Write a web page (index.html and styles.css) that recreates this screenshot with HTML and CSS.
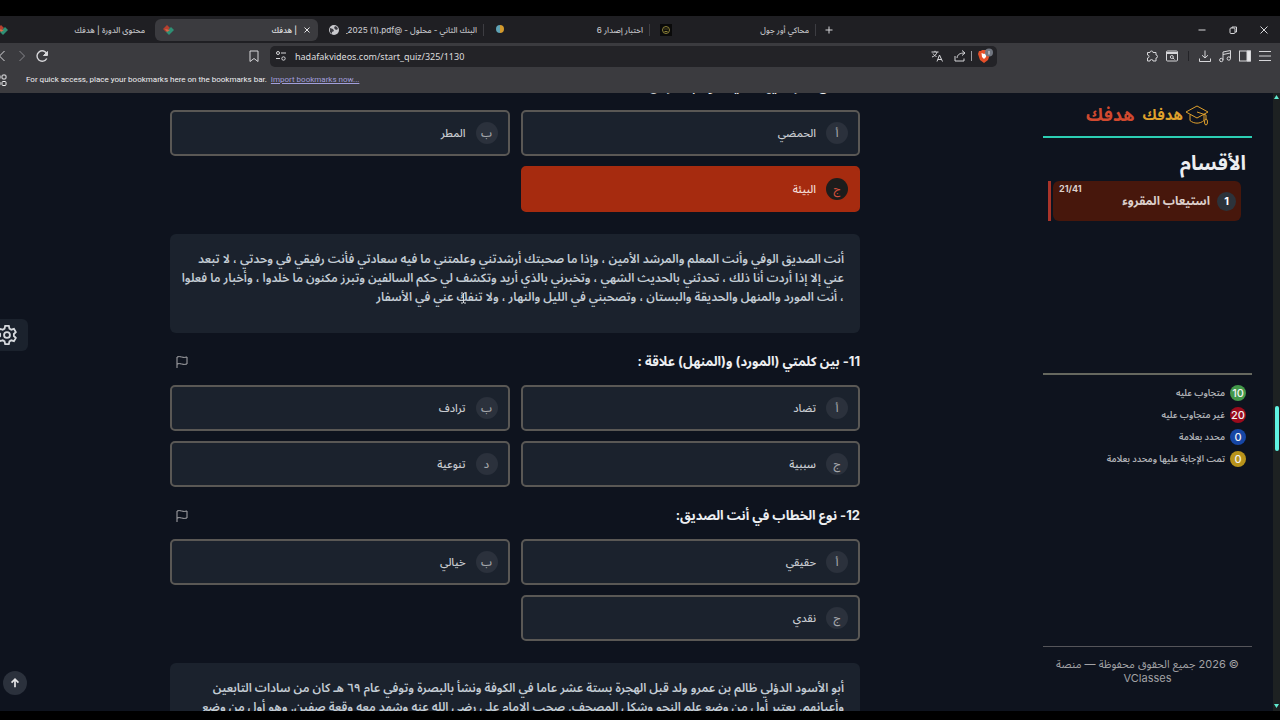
FILE: index.html
```html
<!DOCTYPE html>
<html lang="ar">
<head>
  <meta charset="UTF-8">
  <title>| هدفك</title>
  <link rel="stylesheet" href="styles.css">
</head>
<body>
  <div class="browser">
    <div class="tab-strip">
      <a class="tab" href="#">
        <svg class="favicon" viewBox="0 0 12 12"><path d="M1 5 5 1l3 3-4 4z" fill="#b5402f"/><path d="M4 8l5-5 3 3-5 5z" fill="#2f8f74"/><path d="M3 5l5 1-3 2z" fill="#d9694a"/></svg>
        <span class="tab-title" dir="rtl">محتوى الدورة | هدفك</span>
      </a>
      <div class="tab active">
        <svg class="favicon" viewBox="0 0 12 12"><path d="M1 5 5 1l3 3-4 4z" fill="#b5402f"/><path d="M4 8l5-5 3 3-5 5z" fill="#2f8f74"/><path d="M3 5l5 1-3 2z" fill="#d9694a"/></svg>
        <span class="tab-title" dir="rtl">| هدفك</span>
        <button class="tab-close" aria-label="Close tab"><svg viewBox="0 0 8 8"><path d="M1.500 1.500l5 5M6.500 1.500l-5 5"/></svg></button>
      </div>
      <a class="tab divided" href="#">
        <svg class="favicon" viewBox="0 0 12 12"><circle cx="6" cy="6" r="5" fill="#c8c8cc"/><path d="M2 4l3 1 1 2-2 1v2L2 8zM7 2l2 1 1 2-2 1-2-2z" fill="#3a3a40"/></svg>
        <span class="tab-title" dir="rtl">البنك الثاني - محلول - @<bdi dir="ltr">_2025 (1).pdf</bdi></span>
      </a>
      <a class="tab divided" href="#">
        <svg class="favicon" viewBox="0 0 12 12"><path d="M6 1a4 4 0 0 0 0 8z" fill="#5fa3b5"/><path d="M6 1a4 4 0 0 1 0 8z" fill="#d39a2d"/></svg>
        <span class="tab-title" dir="rtl">اختبار إصدار 6</span>
      </a>
      <a class="tab divided" href="#">
        <svg class="favicon" viewBox="0 0 12 12"><path d="M0 0h12v12H0z" fill="#0a0a0a"/><circle cx="6" cy="6" r="3.500" fill="none" stroke="#8d8238"/><path d="M4.500 5h1M6.500 5h1M4.500 7.500h3" stroke="#8d8238" fill="none"/></svg>
        <span class="tab-title" dir="rtl">محاكي أور جول</span>
      </a>
      <button class="icon-btn new-tab" aria-label="New tab"><svg viewBox="0 0 14 14"><path d="M7 3.500v7M3.500 7h7"/></svg></button>
      <div class="window-buttons">
        <button class="icon-btn" aria-label="Minimize"><svg viewBox="0 0 14 14"><path d="M3.500 7h7"/></svg></button>
        <button class="icon-btn" aria-label="Restore"><svg viewBox="0 0 14 14"><rect x="4" y="5" width="5" height="5.500" rx="1"/><path d="M6 5V4h4.500v5H9"/></svg></button>
        <button class="icon-btn" aria-label="Close"><svg viewBox="0 0 14 14"><path d="M3.500 3.500l7 7M10.500 3.500l-7 7"/></svg></button>
      </div>
    </div>

    <div class="toolbar">
      <div class="nav-buttons">
        <button class="icon-btn" aria-label="Back"><svg viewBox="0 0 14 14"><path d="M9.500 2 4.500 7l5 5"/></svg></button>
        <button class="icon-btn dim" aria-label="Forward"><svg viewBox="0 0 14 14"><path d="M4.500 2l5 5-5 5"/></svg></button>
        <button class="icon-btn" aria-label="Reload"><svg viewBox="0 0 14 14"><path d="M11.800 9.500a5.200 5.200 0 1 1 .2-4.500" stroke-width="1.400"/><path d="M12.500 2.500v4h-4z" fill="#d6d6d9"/></svg></button>
      </div>
      <button class="icon-btn" aria-label="Bookmark"><svg viewBox="0 0 14 14"><path d="M3 2h8v10.500L7 9.500l-4 3z"/></svg></button>
      <div class="address">
        <svg viewBox="0 0 14 14"><circle cx="4" cy="4" r="1.500"/><path d="M7 4h5M2 9.500h4"/><circle cx="9.500" cy="9.500" r="1.700"/></svg>
        <input class="url" type="text" dir="ltr" aria-label="Address" value="hadafakvideos.com/start_quiz/325/1130">
        <button class="icon-btn" aria-label="Translate"><svg viewBox="0 0 14 14"><path d="M1.500 3h7M5 1.800V3M7 3c-.5 2.500-2.500 4.200-5 5M3 4.500c.8 1.500 2 2.500 3.500 3M7 12.500l2.500-6.500 3 6.500M8 10.500h3.800"/></svg></button>
        <button class="icon-btn" aria-label="Share"><svg viewBox="0 0 14 14"><path d="M2 7v5h9V9.500M4 9c.3-3.500 3-5 7.500-5M9 1.500 12 4 9 6.500"/></svg></button>
        <span class="bar light"></span>
        <button class="icon-btn shield" aria-label="Shields"><svg viewBox="0 0 18 16"><path d="M3 3h2l1-1h4l1 1h2l1 3-2 6-4 3-4-3-2-6z" fill="#e5502a" stroke="none"/><path d="M5.500 5 8 6l2.500-1-.5 4-2 2-2-2z" fill="#fff" stroke="none"/><circle cx="13" cy="4.500" r="4" fill="#70757f" stroke="none"/><path d="M13 3v3.500" stroke="#dfe3ea"/></svg></button>
      </div>
      <div class="tool-buttons">
        <button class="icon-btn" aria-label="Extensions"><svg viewBox="0 0 14 14"><path d="M2.500 3.500H5a1.500 1.500 0 1 1 3 0h3V6a1.500 1.500 0 1 1 0 3v3H8a1.500 1.500 0 0 0-3 0H2.500V9a1.500 1.500 0 0 0 0-3z"/></svg></button>
        <button class="icon-btn" aria-label="Find in page"><svg viewBox="0 0 14 14"><rect x="1.500" y="2" width="11" height="10" rx="1"/><path d="M1.500 4h11" stroke-width="2"/><circle cx="6.800" cy="8" r="1.500"/><path d="M8 9l1.500 1.500"/></svg></button>
        <span class="bar"></span>
        <button class="icon-btn" aria-label="Downloads"><svg viewBox="0 0 14 14"><path d="M7 1.500v7.500M4 6.200 7 9l3-2.800M1.500 9.500v3h11v-3"/></svg></button>
        <button class="icon-btn" aria-label="Media"><svg viewBox="0 0 14 14"><path d="M5 11V3l7.500-1.500v8M5 5.500 12.500 4"/><circle cx="3.300" cy="11" r="1.700"/><circle cx="10.800" cy="9.500" r="1.700"/></svg></button>
        <button class="icon-btn" aria-label="Side panel"><svg viewBox="0 0 14 14"><rect x="1.500" y="2" width="11" height="10"/><path d="M9 2h3.500v10H9z" fill="#e8e8ea"/></svg></button>
        <button class="icon-btn" aria-label="Menu"><svg viewBox="0 0 14 14"><path d="M1 2.500h12M1 7h12M1 11.500h12"/></svg></button>
      </div>
    </div>

    <div class="bookmarks">
      <svg viewBox="0 0 14 14"><rect x="1" y="2" width="4" height="4" rx="1"/><rect x="7" y="2" width="4" height="4" rx="1"/><rect x="1" y="8.500" width="4" height="4" rx="1"/><rect x="7" y="8.500" width="4" height="4" rx="1"/></svg>
      <span>For quick access, place your bookmarks here on the bookmarks bar.</span>
      <a href="#">Import bookmarks now...</a>
    </div>

    <div class="page" dir="rtl">
      <div class="scrollbar">
        <svg viewBox="0 0 7 5"><path d="M3.500 0 6 4H1z"/></svg>
        <span class="thumb"></span>
        <svg viewBox="0 0 7 5"><path d="M1 0h5L3.500 4z"/></svg>
      </div>

      <aside class="sidebar">
        <div class="logo">
          <span class="logo-mark">
            <svg viewBox="0 0 24 22"><path d="M1 8 12 2l11 6-11 6zM5 10.500v6c4 3.500 10 3.500 14 0v-6M12 8l9 3v4"/><ellipse cx="21" cy="18" rx="1.500" ry="3"/></svg>
            هدفك
          </span>
          <span class="logo-text">هدفك</span>
        </div>
        <h2>الأقسام</h2>
        <a class="section" href="#">
          <span class="section-number">1</span>
          <span class="section-name">استيعاب المقروء</span>
          <span class="section-count">21/41</span>
        </a>
        <ul class="legend">
          <li><span class="dot green">10</span>متجاوب عليه</li>
          <li><span class="dot red">20</span>غير متجاوب عليه</li>
          <li><span class="dot blue">0</span>محدد بعلامة</li>
          <li><span class="dot gold">0</span>تمت الإجابة عليها ومحدد بعلامة</li>
        </ul>
        <footer>© 2026 جميع الحقوق محفوظة — منصة VClasses</footer>
      </aside>

      <main>
        <div class="quiz">
          <section class="question">
            <div class="question-head">
              <h3>10- من أكثر ما يهدد حياة كوكب الأرض :</h3>
            </div>
            <div class="options">
              <label class="option"><input type="radio" name="q10"><span class="letter">أ</span>الحمضي</label>
              <label class="option"><input type="radio" name="q10"><span class="letter">ب</span>المطر</label>
              <label class="option"><input type="radio" name="q10" checked><span class="letter">ج</span>البيئة</label>
            </div>
          </section>

          <p class="passage">أنت الصديق الوفي وأنت المعلم والمرشد الأمين ، وإذا ما صحبتك أرشدتني وعلمتني ما فيه سعادتي فأنت رفيقي في وحدتي ، لا تبعد<br>عني إلا إذا أردت أنا ذلك ، تحدثني بالحديث الشهي ، وتخبرني بالذي أريد وتكشف لي حكم السالفين وتبرز مكنون ما خلدوا ، وأخبار ما فعلوا<br>، أنت المورد والمنهل والحديقة والبستان ، وتصحبني في الليل والنهار ، ولا تنفك عني في الأسفار</p>

          <section class="question">
            <div class="question-head">
              <h3>11- بين كلمتي (المورد) و(المنهل) علاقة :</h3>
              <button class="flag" aria-label="علامة"><svg viewBox="0 0 14 14"><path d="M2 13V2c3-1.500 6 1.500 10 0v7c-4 1.500-7-1.500-10 0"/></svg></button>
            </div>
            <div class="options">
              <label class="option"><input type="radio" name="q11"><span class="letter">أ</span>تضاد</label>
              <label class="option"><input type="radio" name="q11"><span class="letter">ب</span>ترادف</label>
              <label class="option"><input type="radio" name="q11"><span class="letter">ج</span>سببية</label>
              <label class="option"><input type="radio" name="q11"><span class="letter">د</span>تنوعية</label>
            </div>
          </section>

          <section class="question">
            <div class="question-head">
              <h3>12- نوع الخطاب في أنت الصديق:</h3>
              <button class="flag" aria-label="علامة"><svg viewBox="0 0 14 14"><path d="M2 13V2c3-1.500 6 1.500 10 0v7c-4 1.500-7-1.500-10 0"/></svg></button>
            </div>
            <div class="options">
              <label class="option"><input type="radio" name="q12"><span class="letter">أ</span>حقيقي</label>
              <label class="option"><input type="radio" name="q12"><span class="letter">ب</span>خيالي</label>
              <label class="option"><input type="radio" name="q12"><span class="letter">ج</span>نقدي</label>
            </div>
          </section>

          <p class="passage">أبو الأسود الدؤلي ظالم بن عمرو ولد قبل الهجرة بستة عشر عاما في الكوفة ونشأ بالبصرة وتوفي عام ٦٩ هـ كان من سادات التابعين<br>وأعيانهم. يعتبر أول من وضع علم النحو وشكل المصحف. صحب الامام علي رضي الله عنه وشهد معه وقعة صفين. وهو أول من وضع</p>
        </div>
      </main>

      <button class="settings" aria-label="الإعدادات"><svg viewBox="0 0 24 24"><path d="M10 2h4l.7 3 2 1.200L19.600 5.300l2 3.500-2.100 2.100v2.200l2.100 2.100-2 3.500-2.900-.9-2 1.200-.7 3h-4l-.7-3-2-1.200-2.900.9-2-3.500 2.100-2.100v-2.200L2.400 8.800l2-3.500 2.900.9 2-1.200z"/><circle cx="12" cy="12" r="3.200"/></svg></button>
      <button class="to-top" aria-label="إلى الأعلى"><svg viewBox="0 0 14 14"><path d="M7 12V2.500M3 6.500l4-4 4 4"/></svg></button>
      <svg class="cursor" viewBox="0 0 7 12"><path d="M1 1h2l.5.500L4 1h2M3.500 1v10M1 11h2l.5-.500L4 11h2"/></svg>
    </div>
  </div>
</body>
</html>
```
FILE: styles.css
```css
* {
  box-sizing: border-box;
}

body {
  margin: 0;
  background-color: #000;
  font-family: Inter, "Noto Sans Arabic", "DejaVu Sans", sans-serif;
}

button {
  border: none;
  padding: 0;
  background: none;
  cursor: pointer;
}

svg {
  display: block;
  fill: none;
  stroke: currentColor;
}

.favicon,
.scrollbar svg {
  stroke: none;
}

.browser {
  display: flex;
  flex-direction: column;
  height: 100vh;
  padding: 16px 0 9px;
  overflow: hidden;
  color: #d6d6d9;
}

/* tabs */

.tab-strip {
  display: flex;
  align-items: center;
  gap: 3px;
  height: 27px;
  margin-left: -11px;
  padding-right: 9px;
  background-color: #1f1f23;
  flex-shrink: 0;
}

.tab {
  display: flex;
  align-items: center;
  gap: 6px;
  width: 163px;
  height: 22px;
  padding: 0 7px;
  border-radius: 6px;
  font-size: 8px;
  font-weight: 500;
  color: #c4c4c8;
  text-decoration: none;
}

.tab.active {
  background-color: #3b3b3f;
  color: #e4e4e6;
}

.tab.divided {
  position: relative;
}

.tab.divided::after {
  content: "";
  position: absolute;
  right: 0;
  top: 5px;
  width: 1px;
  height: 12px;
  background-color: #3d3d42;
}

.favicon {
  width: 12px;
  height: 12px;
  flex-shrink: 0;
}

.tab-title {
  flex: 1;
  overflow: hidden;
  line-height: 16px;
  white-space: nowrap;
}

.tab-close svg {
  width: 8px;
  height: 8px;
  color: #e4e4e6;
}

.icon-btn {
  color: #d6d6d9;
}

.icon-btn svg,
.address > svg,
.bookmarks svg {
  width: 14px;
  height: 14px;
  flex-shrink: 0;
}

.new-tab {
  margin-left: 3px;
}

.window-buttons {
  display: flex;
  gap: 17px;
  margin-left: auto;
}

/* toolbar */

.toolbar {
  display: flex;
  align-items: center;
  height: 26px;
  padding-right: 8px;
  background-color: #3b3b3f;
  flex-shrink: 0;
}

.nav-buttons {
  display: flex;
  gap: 6px;
  width: 252px;
  margin-left: -5px;
}

.dim {
  color: #86868b;
}

.address {
  display: flex;
  align-items: center;
  flex: 1;
  gap: 9px;
  height: 21px;
  margin-left: 9px;
  padding: 0 3px 0 4px;
  border-radius: 5px;
  background-color: #232327;
}

.url {
  flex: 1;
  min-width: 0;
  margin-left: -2px;
  padding: 0;
  border: none;
  outline: none;
  background: none;
  font-family: "Noto Sans", sans-serif;
  font-size: 9px;
  color: #dededf;
}

.bar {
  width: 1px;
  height: 10px;
  background-color: #232327;
}

.bar.light {
  margin: 0 -5px;
  background-color: #9a9a9e;
}

.shield svg {
  width: 18px;
  height: 16px;
}

.tool-buttons {
  display: flex;
  align-items: center;
  gap: 6px;
  margin-left: 148px;
}

.tool-buttons .bar {
  margin: 0 3px;
}

.bookmarks {
  display: flex;
  align-items: center;
  gap: 4px;
  height: 24px;
  margin-left: -5px;
  padding-bottom: 3px;
  background-color: #3b3b3f;
  font-family: Roboto, sans-serif;
  font-size: 8px;
  color: #f0f0f2;
  flex-shrink: 0;
}

.bookmarks svg {
  margin-right: 13px;
}

.bookmarks a {
  color: #a29fdc;
}

/* quiz page */

.page {
  position: relative;
  display: flex;
  flex: 1;
  min-height: 0;
  overflow: hidden;
  background-color: #0e131e;
}

.scrollbar {
  display: flex;
  flex-direction: column;
  align-items: center;
  width: 7px;
  padding: 2px 0;
  background-color: #1d2122;
}

.scrollbar svg {
  width: 7px;
  height: 5px;
  fill: #5fe9d0;
}

.thumb {
  width: 4px;
  height: 45px;
  margin: 306px 0 auto;
  border-radius: 2px;
  background-color: #5ff2e2;
}

.sidebar {
  display: flex;
  flex-direction: column;
  width: 243px;
  padding: 0 21px 0 13px;
}

.logo {
  display: flex;
  align-items: center;
  justify-content: center;
  gap: 8px;
  height: 45px;
  border-bottom: 2px solid #2ccfb4;
  font-weight: bold;
}

.logo-mark {
  display: flex;
  align-items: center;
  gap: 2px;
  font-size: 15px;
  color: #dfa02c;
}

.logo-mark svg {
  width: 24px;
  height: 22px;
}

.logo-text {
  font-size: 18px;
  color: #d1492f;
}

.sidebar h2 {
  margin: 10px 6px 3px;
  font-size: 20px;
  line-height: 30px;
  color: #eceef1;
}

.section {
  position: relative;
  display: flex;
  align-items: center;
  gap: 7px;
  height: 40px;
  margin: 0 11px 0 10px;
  padding: 0 5px;
  border-radius: 6px;
  background-color: #47170c;
  font-size: 12px;
  font-weight: bold;
  color: #dccfcb;
  text-decoration: none;
}

.section::after {
  content: "";
  position: absolute;
  left: -5px;
  top: 0;
  width: 3px;
  height: 40px;
  background-color: #a9342a;
}

.section-number {
  width: 19px;
  border-radius: 50%;
  background-color: #2c333b;
  font-size: 11px;
  line-height: 19px;
  text-align: center;
  color: #fff;
}

.section-count {
  position: absolute;
  left: 6px;
  top: 2px;
  font-size: 9px;
  line-height: 12px;
}

.legend {
  flex: 1;
  margin: 152px 0 0;
  padding: 7px 6px;
  border-top: 2px solid #66685f;
  list-style: none;
  font-size: 9px;
  font-weight: 600;
  color: #b0b2b6;
}

.legend li {
  display: flex;
  align-items: center;
  gap: 5px;
  height: 22px;
}

.dot {
  width: 16px;
  border-radius: 50%;
  font-size: 11px;
  font-weight: 500;
  line-height: 16px;
  text-align: center;
  color: #f2f2f2;
}

.green {
  background-color: #43984a;
}

.red {
  background-color: #9b0b1c;
}

.blue {
  background-color: #1646a5;
}

.gold {
  background-color: #b8931b;
}

footer {
  height: 65px;
  padding: 10px 8px;
  border-top: 1px solid #55555a;
  font-size: 11px;
  line-height: 14px;
  text-align: center;
  color: #a2a2a5;
}

main {
  flex: 1;
  min-width: 0;
}

.quiz {
  max-width: 690px;
  margin: -35px auto 0;
}

.question-head {
  display: flex;
  align-items: center;
  justify-content: space-between;
  height: 28px;
  margin: 15px 0 9px;
}

.question-head h3 {
  margin: 0;
  font-size: 13px;
  color: #eceef1;
}

.flag {
  margin-left: 5px;
  color: #a9a9ac;
}

.flag svg {
  width: 14px;
  height: 14px;
}

.options {
  display: grid;
  grid-template-columns: 1fr 1fr;
  gap: 10px 11px;
}

.option {
  position: relative;
  display: flex;
  align-items: center;
  gap: 10px;
  height: 46px;
  padding: 0 10px;
  border: 2px solid #5a5855;
  border-radius: 5px;
  background-color: #1b222d;
  font-size: 11px;
  font-weight: 500;
  color: #c9ccd1;
  cursor: pointer;
}

.option input {
  position: absolute;
  opacity: 0;
}

.letter {
  width: 22px;
  border-radius: 50%;
  background-color: #2b313c;
  line-height: 22px;
  text-align: center;
  color: #a4a6aa;
}

.option:has(input:checked) {
  border-color: #a62b0f;
  background-color: #a62b0f;
  color: #f3dcd5;
}

.option:has(input:checked) .letter {
  background-color: #1d1c1b;
  color: #d14e3c;
}

.passage {
  min-height: 99px;
  margin: 22px 0 0;
  padding: 15px 16px;
  border-radius: 6px;
  background-color: #1b222d;
  font-size: 12px;
  font-weight: 600;
  line-height: 19px;
  white-space: nowrap;
  color: #c3ccd4;
}

/* floating items */

.settings {
  position: absolute;
  left: 0;
  top: 226px;
  width: 28px;
  height: 32px;
  border-radius: 0 6px 6px 0;
  background-color: #1b222d;
  color: #d6d9dd;
}

.settings svg {
  width: 22px;
  height: 22px;
  margin-right: 10px;
  stroke-width: 2;
}

.to-top {
  position: absolute;
  left: 3px;
  bottom: 16px;
  width: 24px;
  height: 24px;
  border-radius: 50%;
  background-color: #2b313c;
  color: #e4e4e6;
}

.to-top svg {
  width: 12px;
  height: 12px;
  margin: 0 auto;
  stroke-width: 2;
}

.cursor {
  position: absolute;
  left: 460px;
  top: 199px;
  width: 7px;
  height: 12px;
  color: #d6d9dd;
}
```
